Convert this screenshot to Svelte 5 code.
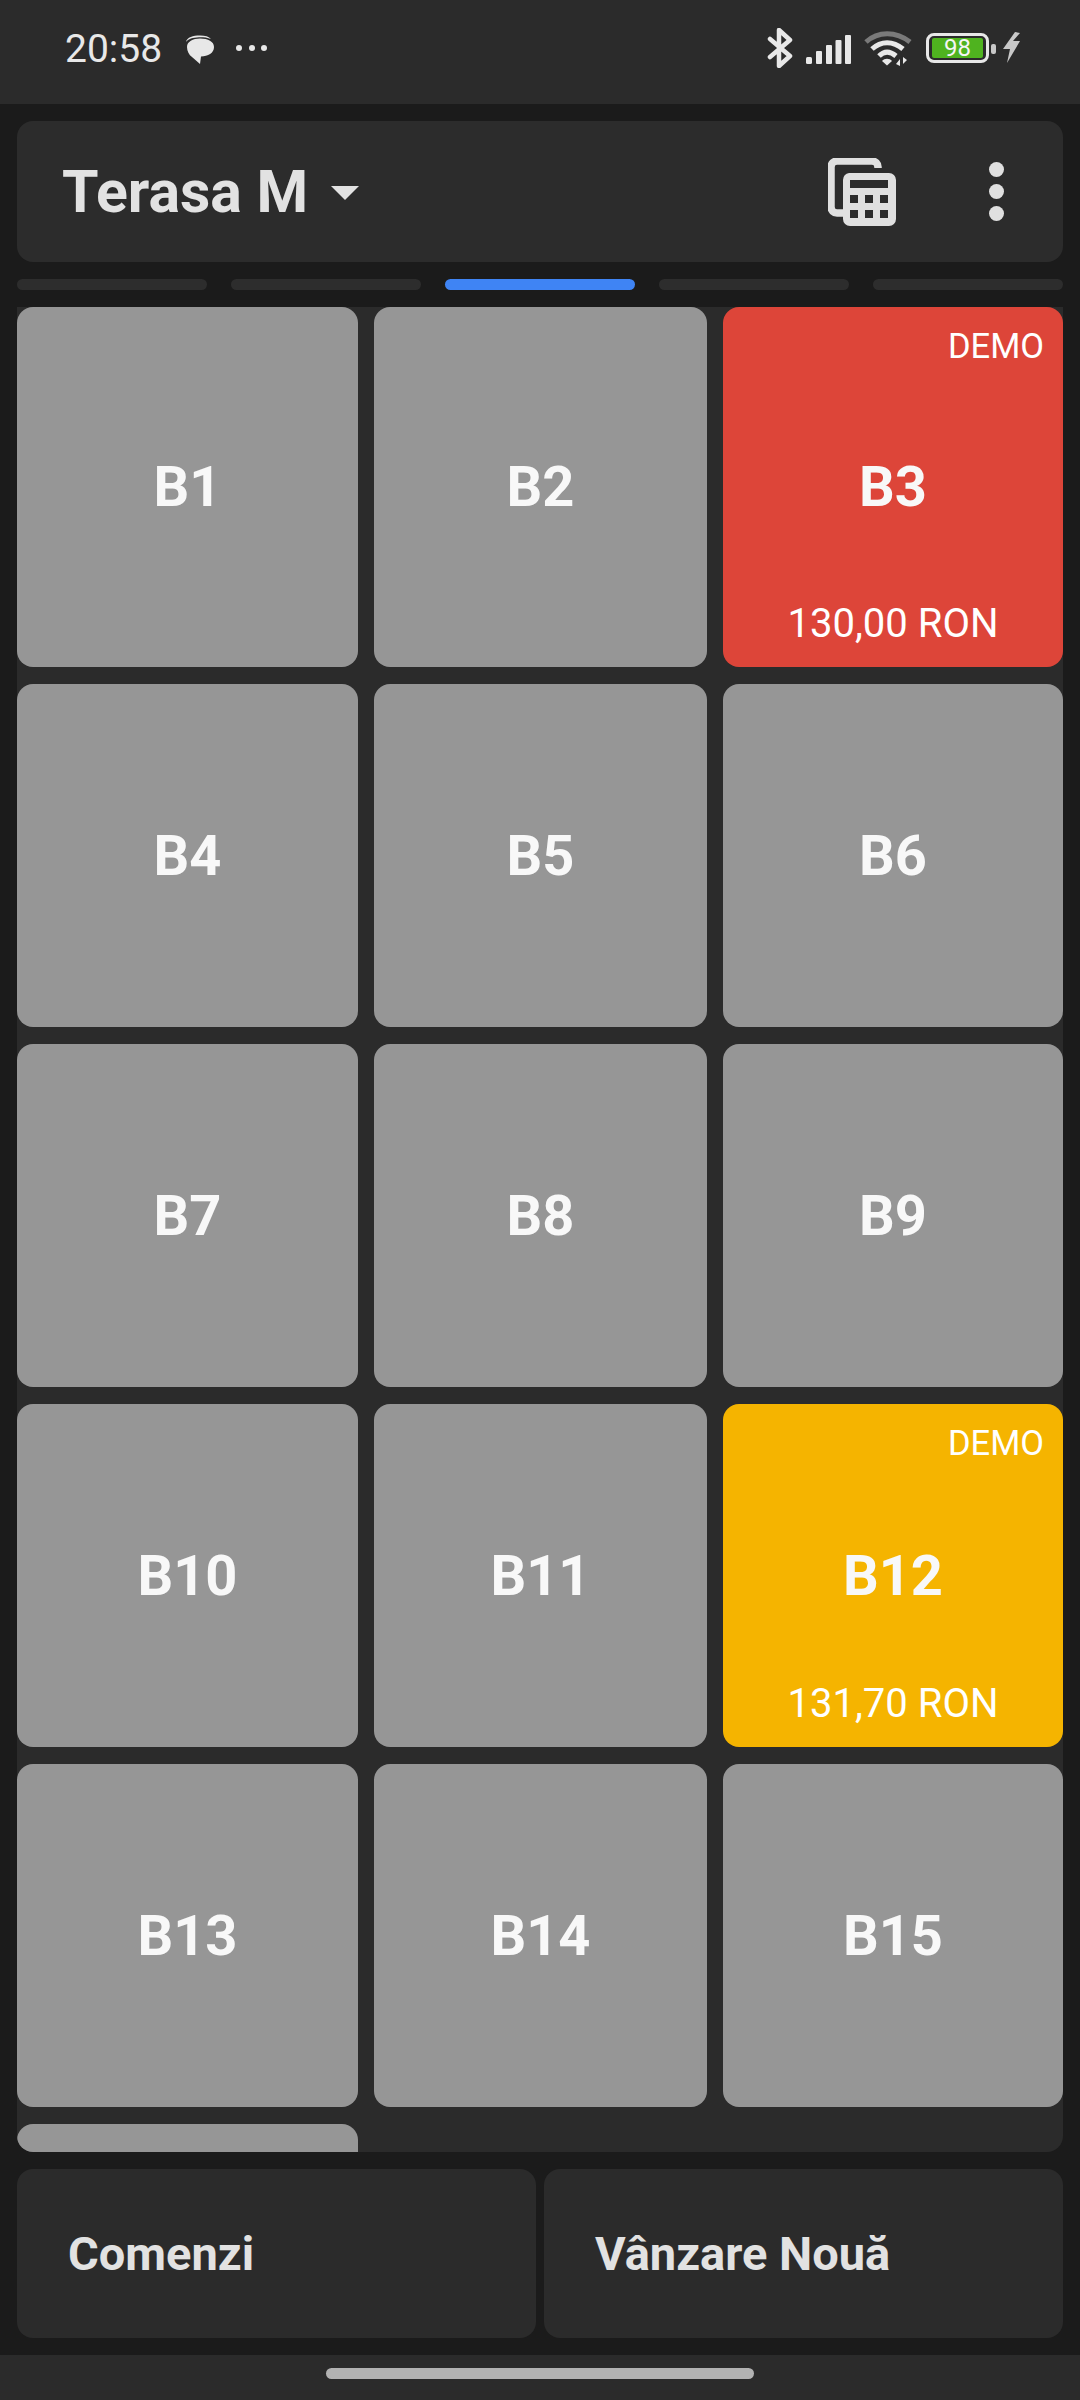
<script>
  const tabs = [0, 1, 2, 3, 4];
  const activeTab = 2;
  const tables = [
    { name: "B1" },
    { name: "B2" },
    { name: "B3", color: "red", price: "130,00 RON" },
    { name: "B4" },
    { name: "B5" },
    { name: "B6" },
    { name: "B7" },
    { name: "B8" },
    { name: "B9" },
    { name: "B10" },
    { name: "B11" },
    { name: "B12", color: "yellow", price: "131,70 RON" },
    { name: "B13" },
    { name: "B14" },
    { name: "B15" },
    { name: "" },
  ];
</script>

<div class="screen">
  <div class="status">
    <span class="time">20:58</span>
    <svg class="bubble" width="30" height="30" viewBox="0 0 30 30">
      <path d="M1 7 C2 2 8 0.5 15 0.5 C20 0.5 24 1.5 26 4 C22 2.5 18 2.2 14 2.3 C8 2.5 3 4 1 7Z" fill="#e8e8e8" />
      <path d="M2 12 C2 6.500 8 3.500 15 3.500 C23 3.500 29 6.500 29 12 C29 18 23 21.500 16 21.500 L15 29 L7 22 C4 20 2 16 2 12Z" fill="#e8e8e8" />
    </svg>
    <span class="dots">
      <i></i><i></i><i></i>
    </span>
    <div class="status-right">
      <svg class="bt" width="27" height="40" viewBox="0 0 27 40">
        <path d="M3 11 L23 28 L12 38 V2 L23 12 L3 29" fill="none" stroke="#e8e8e8" stroke-width="4.500" stroke-linejoin="round" stroke-linecap="round" />
      </svg>
      <svg class="signal" width="46" height="30" viewBox="0 0 46 30">
        <rect x="0" y="22" width="6" height="7" rx="1.500" fill="#e8e8e8" />
        <rect x="10" y="16" width="6" height="13" rx="1" fill="#e8e8e8" />
        <rect x="20" y="10" width="6" height="19" rx="1" fill="#e8e8e8" />
        <rect x="29.500" y="5" width="6" height="24" rx="1" fill="#e8e8e8" />
        <rect x="39" y="0" width="6" height="29" rx="1" fill="#e8e8e8" />
      </svg>
      <svg class="wifi" width="48" height="36" viewBox="0 0 48 36">
        <path d="M2 11 C14 0 32 0 46 11" fill="none" stroke="#7a7a7a" stroke-width="5" />
        <path d="M8 18 C17 9.500 29 9.500 39 18" fill="none" stroke="#e8e8e8" stroke-width="5" />
        <path d="M15 25 C20 20 26 20 32 25" fill="none" stroke="#e8e8e8" stroke-width="5" />
        <path d="M18 30 C20.500 27 25.500 27 28 30 L23 34.500Z" fill="#e8e8e8" />
        <path d="M36 28 V35 L32 33Z M39 26 V33 L43 29Z" fill="#e8e8e8" />
      </svg>
      <div class="battery">
        <div class="cell"><span>98</span></div>
        <div class="nub"></div>
      </div>
      <svg class="bolt" width="19" height="32" viewBox="0 0 19 32">
        <path d="M12 0 L0 17 H7 L4 31 L17 9 H10 L17 1Z" fill="#c8c8c8" />
      </svg>
    </div>
  </div>

  <div class="main">
    <div class="header">
      <div class="title">Terasa M</div>
      <div class="caret"></div>
      <svg class="calc" width="68" height="68" viewBox="0 0 68 68">
        <path d="M18 57 H11 A6 6 0 0 1 5 51 V11 A6 6 0 0 1 11 5 H46 A6 6 0 0 1 52 11 V12" transform="translate(-2 -2)" fill="none" stroke="#e0e0e0" stroke-width="7.500" />
        <path fill-rule="evenodd" fill="#e0e0e0" d="M21 15 H61 A7 7 0 0 1 68 22 V61 A7 7 0 0 1 61 68 H22 A7 7 0 0 1 15 61 V22 A7 7 0 0 1 21 15Z M22 22 V30 H60 V22Z M22 37 V45 H30 V37Z M37 37 V45 H45 V37Z M52 37 V45 H60 V37Z M22 52 V60 H30 V52Z M37 52 V60 H45 V52Z M52 52 V60 H60 V52Z" />
      </svg>
      <div class="more"><i></i><i></i><i></i></div>
    </div>

    <div class="tabs">
      {#each tabs as t}
        <div class="tab" class:active={t === activeTab}></div>
      {/each}
    </div>

    <div class="grid-wrap">
      <div class="grid">
        {#each tables as table}
          <div class="table {table.color ?? ''}">
            {#if table.price}
              <span class="demo">DEMO</span>
              <span class="price">{table.price}</span>
            {/if}
            <span class="name">{table.name}</span>
          </div>
        {/each}
      </div>
    </div>

    <div class="actions">
      <div class="action">Comenzi</div>
      <div class="action">Vânzare Nouă</div>
    </div>
  </div>

  <div class="nav"><div class="pill"></div></div>
</div>

<style>
  :global(body) {
    background: #1b1b1b;
  }

  .screen {
    width: 1080px;
    height: 2400px;
    display: flex;
    flex-direction: column;
    background: #1b1b1b;
    color: #e2e2e2;
    font-family: Roboto, "Liberation Sans", sans-serif;
    overflow: hidden;
  }

  .status {
    height: 104px;
    flex: none;
    background: #2b2b2b;
    display: flex;
    align-items: center;
    padding: 0 58px 0 65px;
    box-sizing: border-box;
    position: relative;
  }
  .time {
    font-size: 39px;
    line-height: 44px;
    color: #e8e8e8;
    margin-top: -7px;
    width: 98px;
  }
  .bubble {
    margin: -5px 0 0 22px;
  }
  .dots {
    display: flex;
    gap: 6.500px;
    margin: -8px 0 0 21px;
  }
  .dots i {
    width: 6px;
    height: 6px;
    border-radius: 50%;
    background: #e8e8e8;
  }
  .status-right {
    margin-left: auto;
    display: flex;
    align-items: center;
    margin-top: -8px;
  }
  .signal {
    margin-left: 12px;
    margin-top: 3px;
  }
  .wifi {
    margin-left: 12px;
    margin-top: 2px;
  }
  .battery {
    margin-left: 14px;
    width: 63px;
    height: 30px;
    box-sizing: border-box;
    border: 3px solid #e8e8e8;
    border-radius: 8px;
    padding: 2px 3px;
    position: relative;
  }
  .cell {
    height: 100%;
    background: #4fb31f;
    border-radius: 2px;
    display: flex;
    align-items: center;
    justify-content: center;
    color: #f5f5f5;
    font-size: 24px;
    line-height: 1;
  }
  .nub {
    position: absolute;
    right: -10px;
    top: 8px;
    width: 5px;
    height: 10px;
    border-radius: 2px;
    background: #c8c8c8;
  }
  .bolt {
    margin-left: 14px;
  }

  .main {
    flex: 1;
    display: flex;
    flex-direction: column;
    padding: 17px 17px 17px;
    min-height: 0;
  }

  .header {
    height: 141px;
    flex: none;
    background: #2c2c2c;
    border-radius: 16px;
    display: flex;
    align-items: center;
    padding: 0 59px 0 45px;
  }
  .title {
    font-size: 59px;
    font-weight: 700;
    color: #e2e2e2;
  }
  .caret {
    margin: 2px 0 0 23px;
    width: 0;
    height: 0;
    border-left: 14px solid transparent;
    border-right: 14px solid transparent;
    border-top: 14px solid #e2e2e2;
  }
  .calc {
    margin-left: auto;
  }
  .more {
    margin-left: 93px;
    display: flex;
    flex-direction: column;
    gap: 7px;
  }
  .more i {
    width: 15px;
    height: 15px;
    border-radius: 50%;
    background: #e0e0e0;
  }

  .tabs {
    display: flex;
    gap: 23.500px;
    margin-top: 17px;
  }
  .tab {
    width: 190.500px;
    height: 11px;
    border-radius: 6px;
    background: #2d2d2d;
  }
  .tab.active {
    background: #3f84f4;
  }

  .grid-wrap {
    margin-top: 17px;
    height: 1845px;
    flex: none;
    background: #2b2b2b;
    border-radius: 0 0 16px 16px;
    overflow: hidden;
  }
  .grid {
    display: grid;
    grid-template-columns: 341px 333px 340px;
    grid-template-rows: 360px repeat(5, 343px);
    column-gap: 16px;
    row-gap: 17px;
  }
  .table {
    background: #969696;
    border-radius: 16px;
    display: flex;
    align-items: center;
    justify-content: center;
    position: relative;
    color: #f8f8f8;
  }
  .table.red {
    background: #dd4539;
  }
  .table.yellow {
    background: #f5b400;
  }
  .name {
    font-size: 56px;
    font-weight: 700;
  }
  .demo {
    position: absolute;
    top: 19px;
    right: 19px;
    font-size: 34.500px;
    color: #fff;
  }
  .price {
    position: absolute;
    bottom: 20px;
    left: 0;
    right: 0;
    text-align: center;
    font-size: 40px;
    color: #fff;
  }

  .actions {
    margin-top: 17px;
    height: 169px;
    flex: none;
    display: flex;
    gap: 8px;
  }
  .action {
    flex: 1;
    background: #2b2b2b;
    border-radius: 16px;
    display: flex;
    align-items: center;
    padding-left: 51px;
    font-size: 47px;
    font-weight: 700;
    color: #e2e2e2;
  }

  .nav {
    height: 45px;
    flex: none;
    background: #2b2b2b;
    display: flex;
    justify-content: center;
    padding-top: 13px;
    box-sizing: border-box;
  }
  .pill {
    width: 428px;
    height: 11px;
    border-radius: 6px;
    background: #b2b2b2;
  }
</style>
